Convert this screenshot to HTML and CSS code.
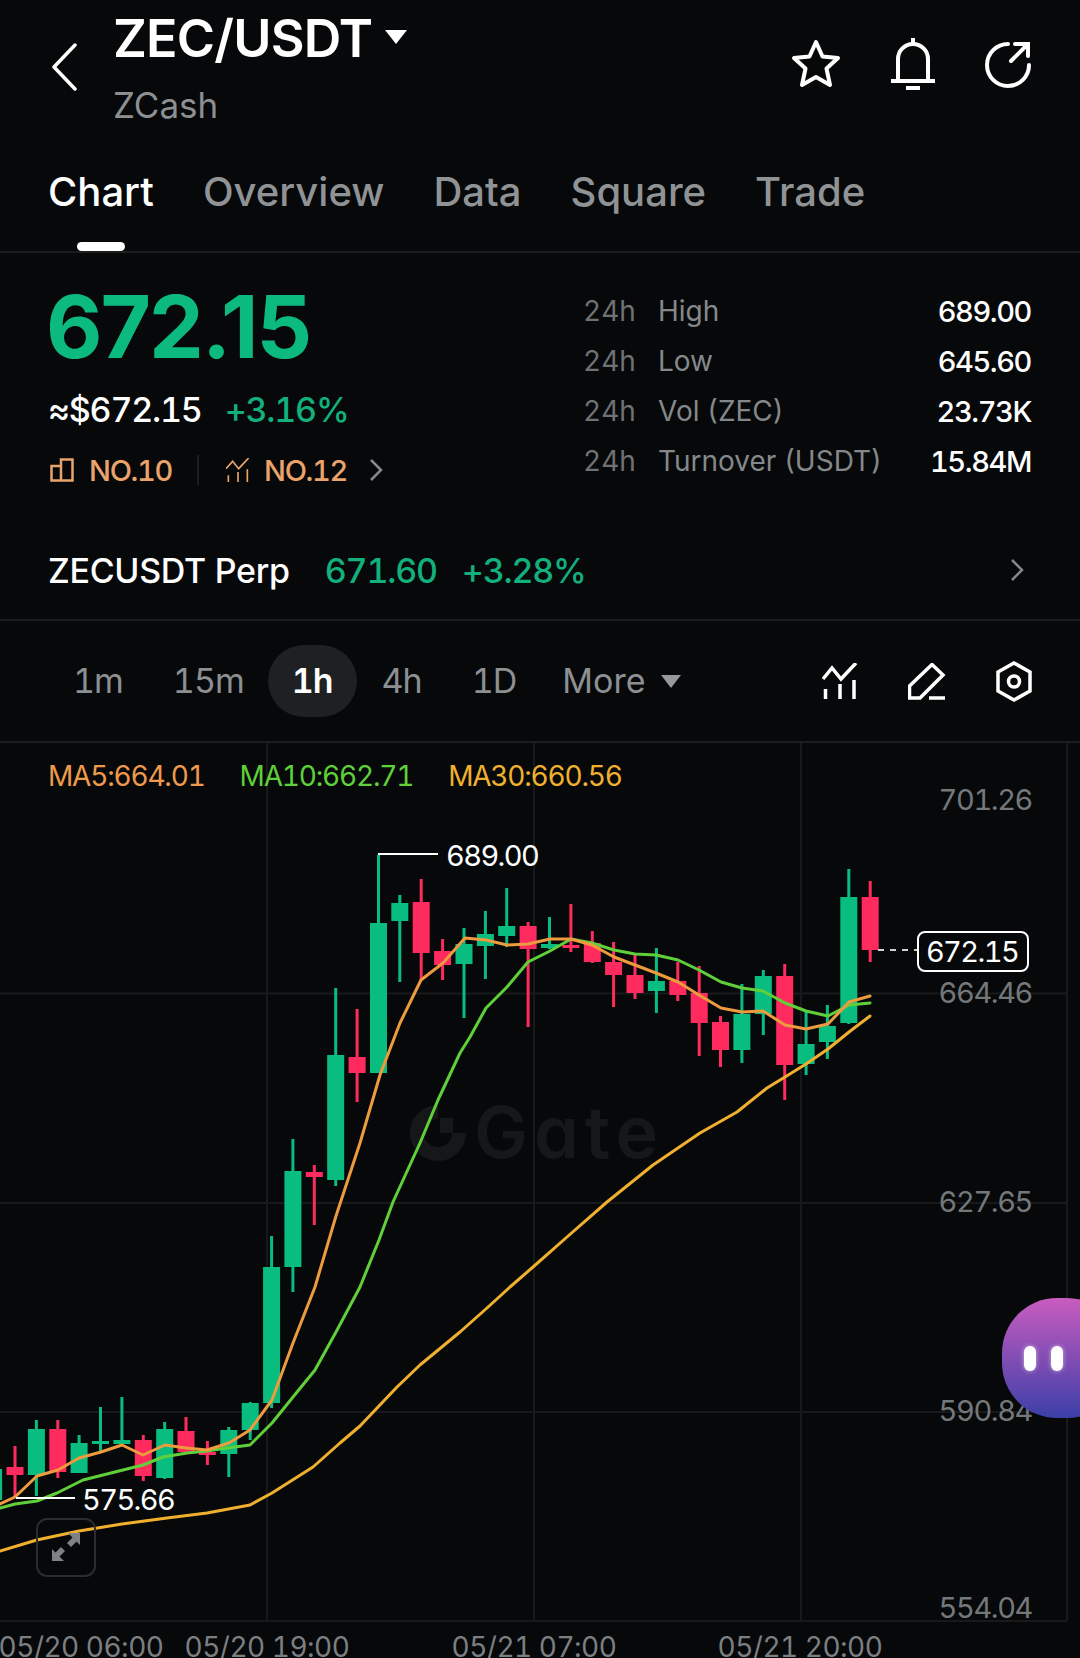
FILE: index.html
```html
<!DOCTYPE html>
<html>
  <head>
    <meta charset="UTF-8" />
    <title>ZEC/USDT</title>
    <link rel="stylesheet" href="styles.css">
  </head>
  <body>
    <header class="top">
      <svg class="back" width="26" height="48" viewBox="0 0 26 48"><path d="M24 2 L3 24 L24 46" /></svg>
      <div class="pair">
        <div class="pair-name">ZEC/USDT <span class="caret caret-big"></span></div>
        <div class="pair-sub">ZCash</div>
      </div>
      <div class="top-icons">
        <svg width="50" height="50" viewBox="0 0 50 50"><polygon points="25,3 31.5,17.5 47,19 35.5,29.5 39,46 25,38 11,46 14.5,29.5 3,19 18.5,17.5" /></svg>
        <svg width="44" height="52" viewBox="0 0 44 52"><path d="M7 43 V21 A15 15 0 0 1 37 21 V43 M0 43 H44 M22 0 V6 M15 50 H29" /></svg>
        <svg width="46" height="48" viewBox="0 0 46 48"><path d="M23 4 A21 21 0 1 0 44 25 M26 21 L42 5 M30 4 H43 V16" /></svg>
      </div>
    </header>

    <nav class="tabs">
      <a class="tab active">Chart</a>
      <a class="tab">Overview</a>
      <a class="tab">Data</a>
      <a class="tab">Square</a>
      <a class="tab">Trade</a>
    </nav>

    <section class="summary">
      <div class="price-col">
        <div class="price">672.15</div>
        <div class="price-sub"><span>≈$672.15</span><span class="up">+3.16%</span></div>
        <div class="ranks">
          <svg class="rank-icon" width="24" height="24" viewBox="0 0 24 24"><path d="M11 8 H1.5 V22.5 H22.5 V1.5 H11 V22.5" /></svg>
          <span class="rank-a">NO.10</span>
          <i class="rank-sep"></i>
          <svg class="rank-icon" width="24" height="24" viewBox="0 0 36 36"><path d="M0 16 L10 5 L19 16 L34 0 M3.5 26 V36 M18 21 V36 M32 17 V36" /></svg>
          <span class="rank-b">NO.12</span>
          <svg class="chev" width="14" height="24" viewBox="0 0 14 24"><path d="M2 2 L12 12 L2 22" /></svg>
        </div>
      </div>
      <div class="stats">
        <div class="stat"><span class="stat-h">24h</span><span class="stat-k">High</span><span class="stat-v">689.00</span></div>
        <div class="stat"><span class="stat-h">24h</span><span class="stat-k">Low</span><span class="stat-v">645.60</span></div>
        <div class="stat"><span class="stat-h">24h</span><span class="stat-k">Vol (ZEC)</span><span class="stat-v">23.73K</span></div>
        <div class="stat"><span class="stat-h">24h</span><span class="stat-k">Turnover (USDT)</span><span class="stat-v">15.84M</span></div>
      </div>
    </section>

    <section class="perp">
      <span class="perp-name">ZECUSDT Perp</span>
      <span class="up perp-price">671.60</span>
      <span class="up perp-change">+3.28%</span>
      <svg class="chev perp-chev" width="14" height="24" viewBox="0 0 14 24"><path d="M2 2 L12 12 L2 22" /></svg>
    </section>

    <section class="frames">
      <a class="frame">1m</a>
      <a class="frame">15m</a>
      <a class="frame active">1h</a>
      <a class="frame">4h</a>
      <a class="frame">1D</a>
      <a class="frame more">More <span class="caret"></span></a>
      <div class="frame-icons">
        <svg width="36" height="36" viewBox="0 0 36 36"><path d="M1 16 L10 5 L19 16 L34 0 M3.5 26 V36 M18 21 V36 M32 17 V36" /></svg>
        <svg width="38" height="37" viewBox="0 0 38 37"><path d="M21 35 H37 M12 35 H1.5 V23 L24 1.5 L35 12 Z" /></svg>
        <svg width="36" height="41" viewBox="0 0 36 41"><path d="M18 2 L34 11 V30 L18 39 L2 30 V11 Z" /><circle cx="18" cy="20.5" r="5.5" /></svg>
      </div>
    </section>

    <section class="chart">
      <div class="legend">
        <span class="ma5">MA5:664.01</span>
        <span class="ma10">MA10:662.71</span>
        <span class="ma30">MA30:660.56</span>
      </div>

      <svg class="plot" width="1080" height="915" viewBox="0 743 1080 915">
        <!-- grid -->
        <path class="grid" d="M0 993.5 H1067 M0 1203 H1067 M0 1412 H1067 M0 1621 H1067 M267 743 V1621 M534 743 V1621 M801 743 V1621 M1067 743 V1621" />

        <!-- watermark -->
        <g class="mark">
          <path d="M438 1112 A21 21 0 1 0 459 1133" />
          <rect x="440" y="1118" width="13" height="15" />
          <text x="474" y="1158">Gate</text>
        </g>

        <!-- candles, wicks then bodies -->
        <path class="wick up-c" d="M-6.4 1500V1510 M36.4 1420V1496 M79.1 1435V1473 M100.5 1407V1451 M121.9 1397V1444 M164.7 1422V1479 M228.8 1427V1477 M250.2 1402V1440 M271.6 1236V1408 M292.9 1139V1292 M335.7 988V1186 M378.5 855V1073 M399.8 895V982 M464 928V1018 M485.4 911V979 M506.7 888V947 M549.5 917V949 M656.4 948V1013 M741.9 984V1063 M763.3 970V1035 M806.1 1012V1075 M827.4 1005V1059 M848.8 869V1024" />
        <path class="wick down-c" d="M15 1446V1497 M57.8 1420V1478 M143.3 1435V1481 M186 1417V1452 M207.4 1441V1465 M314.3 1165V1225 M357.1 1009V1102 M421.2 879V980 M442.6 939V980 M528.1 922V1027 M570.9 904V952 M592.3 931V963 M613.6 942V1007 M635 953V999 M677.8 962V1001 M699.2 966V1056 M720.5 1016V1067 M784.7 964V1100 M870.2 881V962" />
        <path class="body up-c" d="M-6.4 1469V1500 M36.4 1429V1475 M79.1 1443V1473 M100.5 1441V1444 M121.9 1440V1444 M164.7 1429V1478 M228.8 1430V1454 M250.2 1403V1430 M271.6 1267V1403 M292.9 1171V1267 M335.7 1055V1180 M378.5 923V1073 M399.8 903V921 M464 944V964 M485.4 934V946 M506.7 926V936 M549.5 944V948 M656.4 981V991 M741.9 1014V1050 M763.3 976V1014 M806.1 1044V1064 M827.4 1026V1042 M848.8 897V1023" />
        <path class="body down-c" d="M15 1467V1475 M57.8 1429V1472 M143.3 1440V1476 M186 1431V1452 M207.4 1452V1455 M314.3 1172V1177 M357.1 1057V1073 M421.2 902V953 M442.6 951V965 M528.1 926V949 M570.9 945V948 M592.3 943V962 M613.6 962V975 M635 975V993 M677.8 981V995 M699.2 993V1023 M720.5 1022V1050 M784.7 976V1065 M870.2 897V950" />

        <!-- moving averages -->
        <polyline class="line line-30" points="0,1551 36.7,1540 79,1531 122,1524 167,1518 207,1513 250,1505 272,1493 313,1467 340,1443 360,1426 397,1387 420,1365 460,1332 487,1308 510,1287 533,1267 567,1237 607,1202 653,1165 700,1133 737,1112 767,1088 785,1077 806,1064 828,1049 849,1032 870,1016" />
        <polyline class="line line-10" points="0,1508 15,1504 37,1501 57,1493 83,1480 123,1470 143,1465 163,1457 187,1453 207,1451 227,1448 250,1445 272,1423 293,1397 315,1370 336,1332 360,1287 379,1240 393,1202 420,1143 438,1100 460,1053 470,1037 486,1008 507,987 528,962 550,951 571,939 592,943 614,950 635,954 656,955 678,960 699,970 721,982 742,988 763,991 785,1003 806,1011 828,1016 849,1005 870,1003" />
        <polyline class="line line-5" points="0,1504 15,1497 37,1476 58,1470 79,1458 101,1452 122,1445 143,1455 165,1445 186,1448 207,1450 229,1443 250,1430 272,1400 293,1343 315,1287 336,1216 360,1143 380,1075 400,1023 421,980 443,963 465,938 486,940 507,945 528,944 550,939 571,939 592,945 614,957 635,965 656,973 678,982 699,995 721,1008 742,1012 763,1011 785,1025 806,1029 828,1024 849,1002 870,996" />

        <!-- axis -->
        <g class="y-labels">
          <text x="1032" y="810">701.26</text>
          <text x="1032" y="1003">664.46</text>
          <text x="1032" y="1212">627.65</text>
          <text x="1032" y="1421">590.84</text>
          <text x="1032" y="1618">554.04</text>
        </g>
        <g class="x-labels">
          <text x="81" y="1657">05/20 06:00</text>
          <text x="267" y="1657">05/20 19:00</text>
          <text x="534" y="1657">05/21 07:00</text>
          <text x="800" y="1657">05/21 20:00</text>
        </g>

        <!-- high / low / last -->
        <path class="mark-line" d="M378 854 H438 M16 1498 H75" />
        <text class="mark-text" x="446" y="866">689.00</text>
        <text class="mark-text" x="82" y="1510">575.66</text>
        <path class="last-dash" d="M878 950 H917" />
        <rect class="last-box" x="918" y="932" width="110" height="39" rx="7" />
        <text class="mark-text last-text" x="972" y="962">672.15</text>
      </svg>

      <div class="expand">
        <svg width="32" height="32" viewBox="0 0 32 32"><path d="M30 1 H18 L22.5 5.5 L17 11 L21 15 L26.5 9.500 L30 13 Z M2 29 H14 L9.500 24.500 L15 19 L11 15 L5.500 20.500 L2 17 Z" /></svg>
      </div>
      <div class="bubble"><i></i><i></i></div>
    </section>
  </body>
</html>
```

FILE: styles.css
```css
* {
  box-sizing: border-box;
}
html,
body {
  margin: 0;
  height: 1658px;
  overflow: hidden;
}
body {
  background: #060809;
  color: #fff;
  font-family: Inter, "Liberation Sans", sans-serif;
  font-variant-numeric: tabular-nums;
}
svg path,
svg polygon,
svg circle {
  fill: none;
  stroke: #fff;
  stroke-width: 4;
}

/* header */
.top {
  display: flex;
  height: 140px;
  padding: 0 49px 0 51px;
}
.back {
  margin: 43px 0 0 0;
}
.back path {
  stroke-width: 3.5;
  stroke-linecap: round;
  stroke-linejoin: round;
}
.pair {
  margin: 6px 0 0 36px;
}
.pair-name {
  display: flex;
  align-items: center;
  gap: 13px;
  font-size: 52px;
  line-height: 66px;
  font-weight: 600;
  letter-spacing: -0.8px;
}
.pair-sub {
  margin-top: 13px;
  font-size: 35px;
  line-height: 40px;
  color: #8d9092;
}
.caret {
  display: inline-block;
  border-left: 10px solid transparent;
  border-right: 10px solid transparent;
  border-top: 13px solid #96999b;
}
.caret-big {
  border-left-width: 11px;
  border-right-width: 11px;
  border-top: 14px solid #fff;
  margin-top: -4px;
}
.top-icons {
  display: flex;
  align-items: center;
  gap: 50px;
  margin-left: auto;
  height: 52px;
  margin-top: 38px;
}
.top-icons polygon {
  stroke-linejoin: round;
}
.top-icons svg:last-child path {
  stroke-linecap: round;
}

/* tabs */
.tabs {
  display: flex;
  gap: 49px;
  height: 113px;
  padding: 0 48px;
  border-bottom: 2px solid #1b1d1e;
}
.tab {
  position: relative;
  font-size: 40px;
  line-height: 46px;
  margin-top: 29px;
  color: #909395;
  font-weight: 500;
}
.tab.active {
  color: #fff;
}
.tab.active::after {
  content: "";
  position: absolute;
  left: 29px;
  top: 73px;
  width: 48px;
  height: 9px;
  border-radius: 5px;
  background: #fff;
}

/* price block */
.summary {
  display: flex;
  height: 260px;
  padding: 0 48px;
}
.price {
  font-size: 87px;
  line-height: 100px;
  margin: 24px 0 0 -2px;
  font-weight: 700;
  color: #0cb97e;
  letter-spacing: -2px;
  font-variant-numeric: normal;
}
.price-sub {
  display: flex;
  gap: 23px;
  margin-top: 13px;
  font-size: 34px;
  line-height: 40px;
  font-weight: 500;
  letter-spacing: -1.2px;
}
.up {
  color: #12b07d;
}
.ranks {
  display: flex;
  align-items: center;
  margin-top: 20px;
  height: 40px;
  font-size: 29px;
  font-weight: 500;
  color: #e9a36b;
  letter-spacing: -1.3px;
}
.rank-icon {
  margin-left: 2px;
}
.rank-icon path {
  stroke: #e9a36b;
  stroke-width: 2.500;
}
.rank-a {
  margin-left: 15px;
}
.rank-sep {
  width: 2px;
  height: 30px;
  margin: 0 25px 0 25px;
  background: #1c1e1f;
}
.rank-b {
  margin-left: 14px;
}
.chev {
  margin-left: 22px;
}
.chev path {
  stroke: #85888a;
  stroke-width: 2.500;
}
.stats {
  margin: 33px 1px 0 auto;
  width: 448px;
}
.stat {
  display: flex;
  height: 50px;
  align-items: center;
  font-size: 28px;
  color: #85888a;
}
.stat-h {
  width: 75px;
  color: #6f7274;
}
.stat-v {
  margin-left: auto;
  color: #fff;
  font-size: 29px;
  font-weight: 500;
  letter-spacing: -1.4px;
}

/* perp row */
.perp {
  display: flex;
  align-items: center;
  gap: 25px;
  height: 108px;
  padding: 8px 48px 0;
  border-bottom: 2px solid #1b1d1e;
  font-size: 34px;
  font-weight: 500;
  letter-spacing: -0.3px;
}
.perp-price {
  margin-left: 10px;
  letter-spacing: -1.2px;
}
.perp-change {
  letter-spacing: -1.2px;
}
.perp-chev {
  margin-left: auto;
  margin-right: 8px;
}

/* interval row */
.frames {
  display: flex;
  align-items: center;
  height: 122px;
  padding: 0 48px;
  border-bottom: 2px solid #1b1d1e;
  font-size: 34px;
  color: #8d9092;
  letter-spacing: -1px;
}
.frame {
  padding: 0 25px;
  line-height: 72px;
  height: 72px;
}
.frame.active {
  margin-left: -1px;
  padding: 0 24px;
  border-radius: 36px;
  background: #1e2022;
  color: #fff;
  font-weight: 600;
}
.more {
  display: flex;
  align-items: center;
  gap: 16px;
  padding: 0 0 0 21px;
  letter-spacing: 0;
}
.frame-icons {
  display: flex;
  align-items: center;
  gap: 50px;
  margin-left: auto;
}
.frame-icons path,
.frame-icons circle {
  stroke-width: 3.500;
}

/* chart */
.chart {
  position: relative;
  height: 915px;
}
.plot {
  position: absolute;
  left: 0;
  top: 0;
  display: block;
}
.legend {
  position: absolute;
  z-index: 1;
  left: 48px;
  top: 16px;
  display: flex;
  gap: 35px;
  font-size: 28px;
  line-height: 34px;
  letter-spacing: -1.2px;
}
.ma5 {
  color: #ee9a4c;
}
.ma10 {
  color: #5fd03a;
}
.ma30 {
  color: #f0b02e;
}
.plot .grid {
  stroke: #17191a;
  stroke-width: 2;
}
.plot .mark path {
  stroke: #151718;
  stroke-width: 14;
}
.mark rect {
  fill: #151718;
}
.mark text {
  fill: #151718;
  font-size: 72px;
  font-weight: 600;
  letter-spacing: 6px;
  font-feature-settings: "cv11";
}
.plot .wick {
  stroke-width: 3;
}
.plot .body {
  stroke-width: 17;
}
.plot .up-c {
  stroke: #09bd80;
}
.plot .down-c {
  stroke: #ff2a5e;
}
.line {
  fill: none;
  stroke-width: 3;
  stroke-linejoin: round;
  stroke-linecap: round;
}
.line-5 {
  stroke: #ee9a3e;
}
.line-10 {
  stroke: #5fd03a;
}
.line-30 {
  stroke: #f0b02e;
}
.y-labels text {
  fill: #75787a;
  font-size: 29px;
  text-anchor: end;
  letter-spacing: -1.4px;
}
.x-labels text {
  fill: #7c7f81;
  font-size: 28px;
  text-anchor: middle;
  letter-spacing: -0.5px;
}
.plot .mark-line {
  stroke-width: 2;
}
.mark-text {
  fill: #fff;
  font-size: 29px;
  letter-spacing: -1.6px;
}
.last-text {
  text-anchor: middle;
}
.plot .last-dash {
  stroke: #cfd0d1;
  stroke-width: 2;
  stroke-dasharray: 6 6;
}
.last-box {
  fill: #060809;
  stroke: #fff;
  stroke-width: 2;
}
.expand {
  position: absolute;
  left: 36px;
  top: 775px;
  width: 60px;
  height: 59px;
  display: flex;
  align-items: center;
  justify-content: center;
  border: 2px solid #2a2c2d;
  border-radius: 11px;
}
.expand path {
  fill: #7f8284;
  stroke: none;
}
.bubble {
  position: absolute;
  left: 1002px;
  top: 555px;
  width: 120px;
  height: 120px;
  display: flex;
  align-items: center;
  gap: 15px;
  padding-left: 22px;
  border-radius: 55px;
  background: linear-gradient(#c95cc0, #3c3fa8);
}
.bubble i {
  width: 12px;
  height: 25px;
  border-radius: 6px;
  background: #fff;
  box-shadow: 0 0 4px rgba(255, 255, 255, 0.6);
}
```
